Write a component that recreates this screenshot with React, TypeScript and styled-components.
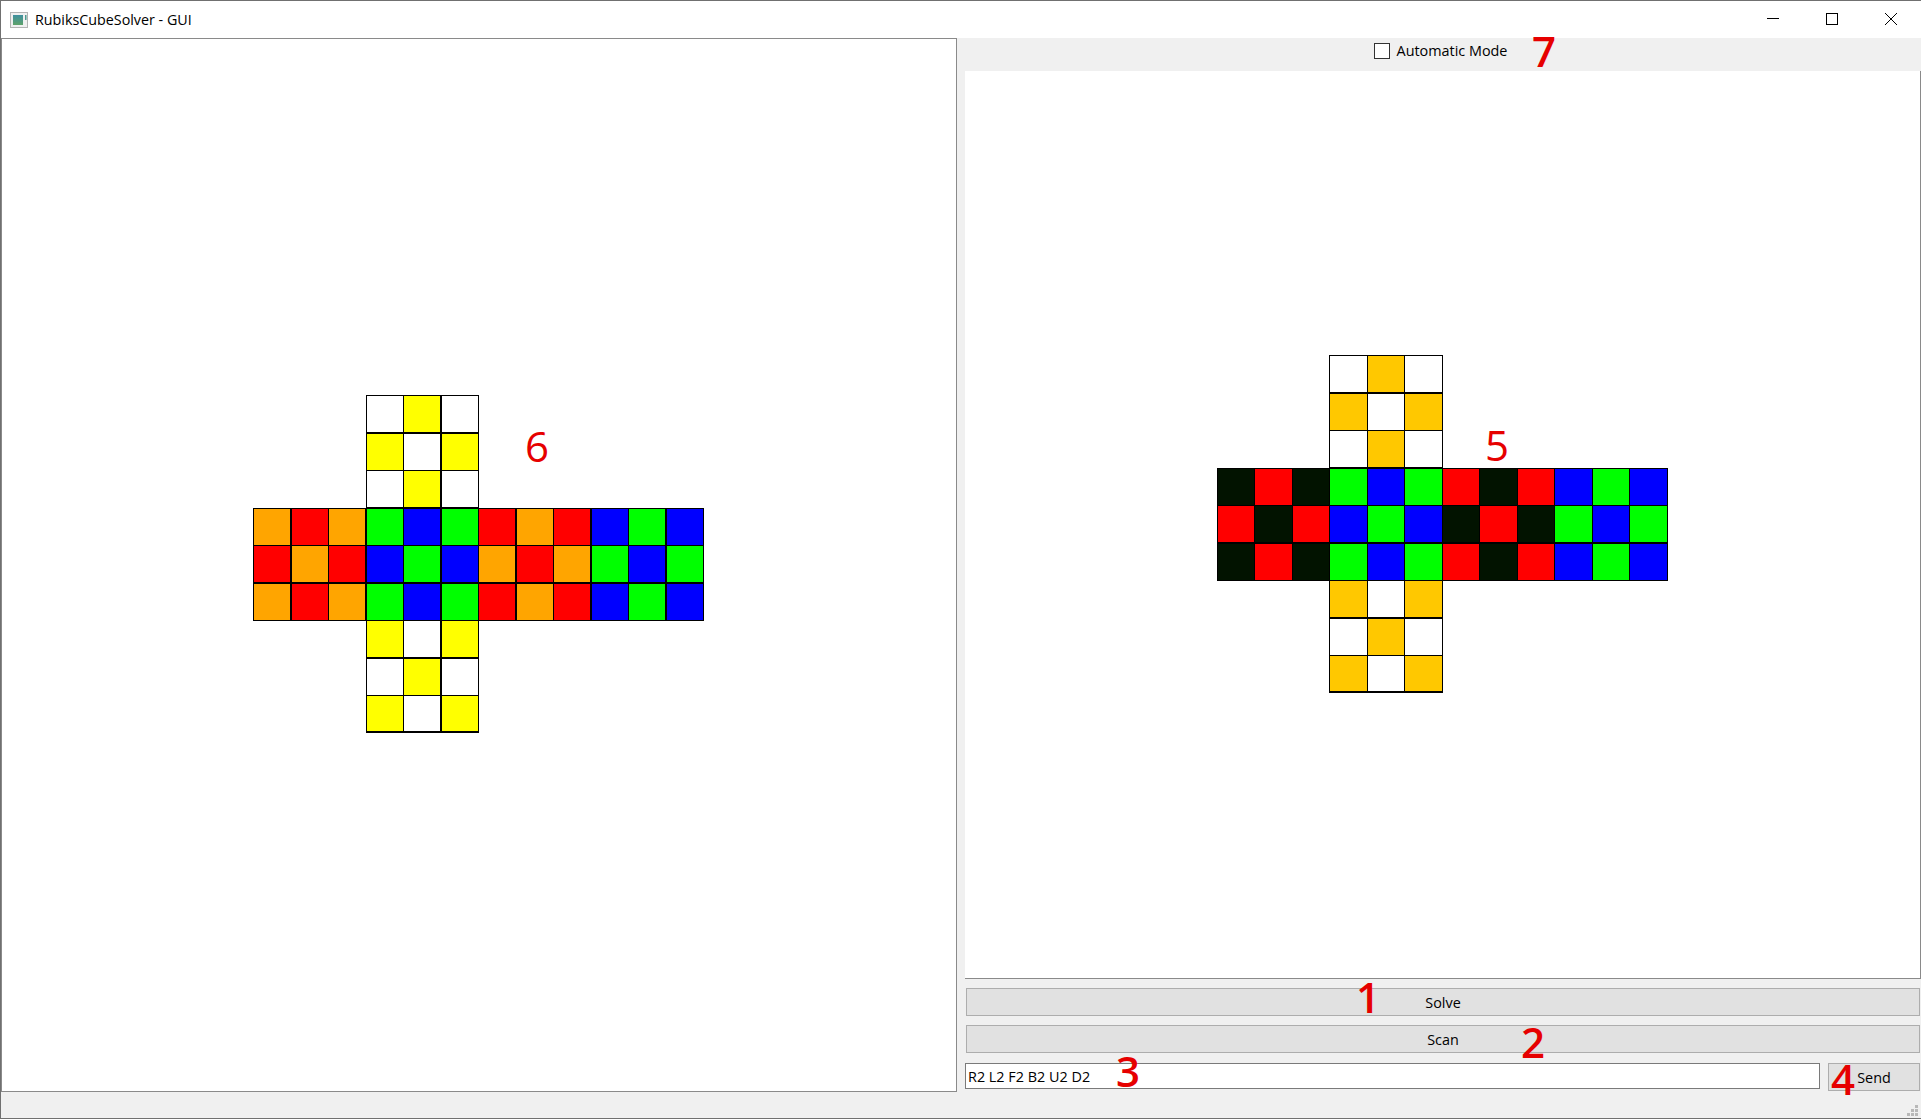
import React from 'react';
import styled, { createGlobalStyle } from 'styled-components';

const GlobalStyle = createGlobalStyle`
  html, body {
    margin: 0;
    padding: 0;
    background: #f0f0f0;
  }
`;

const Window = styled.div`
  position: relative;
  width: 1921px;
  height: 1119px;
  box-sizing: border-box;
  border: 1px solid #707070;
  border-right: 0;
  display: flex;
  flex-direction: column;
  background: #f0f0f0;
  color: #000;
  font-family: 'Open Sans', 'Noto Sans', sans-serif;
  font-size: 14.4px;
  overflow: hidden;
`;

const TitleBar = styled.div`
  height: 37px;
  flex: none;
  display: flex;
  align-items: center;
  background: #fff;
  padding: 0 0.5px 0 9px;
`;

const AppTitle = styled.span`
  margin-left: 7px;
  flex: 1;
  font-size: 14.3px;
`;

const WindowButton = styled.div`
  width: 59px;
  height: 37px;
  box-sizing: border-box;
  padding-bottom: 1px;
  display: flex;
  align-items: center;
  justify-content: center;
`;

const Body = styled.div`
  flex: 1;
  min-height: 0;
  display: flex;
`;

const CubePanel = styled.div`
  width: 956px;
  flex: none;
  box-sizing: border-box;
  border: 1px solid #8a8a8a;
  background: #fff;
  display: flex;
  align-items: center;
  justify-content: center;
  padding: 0 2px 2.5px 0;
`;

const Controls = styled.div`
  flex: 1;
  min-width: 0;
  display: flex;
  flex-direction: column;
  padding: 0 0 1px 8px;
`;

const ModeRow = styled.div`
  height: 33px;
  flex: none;
  box-sizing: border-box;
  display: flex;
  align-items: center;
  justify-content: center;
  gap: 7px;
  padding: 0 5px 8px 0;
`;

const CheckBox = styled.span`
  width: 14px;
  height: 14px;
  border: 1px solid #333;
  background: #fff;
  display: block;
`;

const ScanView = styled.div`
  flex: 1;
  min-height: 0;
  box-sizing: border-box;
  background: #fff;
  border-right: 1px solid #8a8a8a;
  border-bottom: 1px solid #8a8a8a;
  display: flex;
  align-items: center;
  justify-content: center;
  padding: 0 1.2px 1.5px 0;
`;

const PushButton = styled.button`
  display: block;
  margin: 9px 0 0 1px;
  height: 28px;
  width: 954px;
  box-sizing: border-box;
  border: 1px solid #adadad;
  background: #e1e1e1;
  color: #000;
  font: inherit;
  padding: 0;
`;

const CommandRow = styled.div`
  display: flex;
  align-items: flex-start;
  margin-top: 10px;
  gap: 8px;
`;

const CommandInput = styled.input`
  width: 855px;
  height: 26px;
  box-sizing: border-box;
  border: 1px solid #7a7a7a;
  background: #fff;
  font: inherit;
  color: #000;
  padding: 0 2px;
  outline: none;
`;

const SendButton = styled(PushButton)`
  margin: 0;
  width: 92px;
`;

const StatusBar = styled.div`
  height: 26px;
  flex: none;
  display: flex;
  align-items: flex-end;
  justify-content: flex-end;
`;

// the red numbers were painted over the screenshot afterwards
const Marker = styled.span<{ $x: number; $y: number; $thin?: boolean }>`
  position: absolute;
  left: ${p => p.$x}px;
  top: ${p => p.$y}px;
  font-size: 42px;
  font-weight: ${p => (p.$thin ? 400 : 600)};
  line-height: 42px;
  color: #e60000;
  pointer-events: none;
`;

const Net = styled.div`
  display: grid;
  grid-template-columns: repeat(12, 37.5px);
  grid-template-rows: repeat(9, 37.5px);
  width: 450px;
  height: 337.5px;
`;

const Sticker = styled.div<{ $color: string; $col: number; $row: number; $w: number }>`
  grid-column: ${p => p.$col};
  grid-row: ${p => p.$row};
  width: ${p => p.$w}px;
  height: 38px;
  box-sizing: border-box;
  border: 1px solid #000;
  border-bottom-width: ${p => (p.$row === 9 ? 2 : 1)}px;
  background: ${p => p.$color};
`;

const rows = [
  '...wyw......',
  '...ywy......',
  '...wyw......',
  'orogbgrorbgb',
  'rorbgborogbg',
  'orogbgrorbgb',
  '...ywy......',
  '...wyw......',
  '...ywy......',
];

type Palette = Record<string, string>;

const solved: Palette = { w: '#ffffff', y: '#ffff00', o: '#ffa500', r: '#ff0000', g: '#00ff00', b: '#0000ff' };
const scanned: Palette = { w: '#ffffff', y: '#ffc800', o: '#021300', r: '#ff0000', g: '#00ff00', b: '#0000ff' };

const CubeNet: React.FC<{ colors: Palette; cellWidth: number }> = ({ colors, cellWidth }) => (
  <Net>
    {rows.flatMap((row, r) =>
      row.split('').map((c, col) =>
        c === '.' ? null : (
          <Sticker key={`${r}-${col}`} $col={col + 1} $row={r + 1} $w={cellWidth} $color={colors[c]} />
        ),
      ),
    )}
  </Net>
);

const App: React.FC = () => (
  <>
    <GlobalStyle />
    <Window>
      <TitleBar>
        <svg width="18" height="16" viewBox="0 0 18 16">
          <defs>
            <linearGradient id="appIcon" x1="0" y1="0" x2="0" y2="1">
              <stop offset="0" stopColor="#3f8f9f" />
              <stop offset="1" stopColor="#5fa36a" />
            </linearGradient>
          </defs>
          <rect x="0.5" y="0.5" width="17" height="15" fill="#f0f0f0" stroke="#b4b4b4" />
          <rect x="3" y="3" width="10" height="10" fill="url(#appIcon)" />
          <rect x="15" y="3" width="1.5" height="5" fill="#4f9a90" />
        </svg>
        <AppTitle>RubiksCubeSolver - GUI</AppTitle>
        <WindowButton>
          <svg width="12" height="12" viewBox="0 0 12 12">
            <path d="M0 5.5H12" stroke="#000" strokeWidth="1" />
          </svg>
        </WindowButton>
        <WindowButton>
          <svg width="12" height="12" viewBox="0 0 12 12">
            <rect x="0.5" y="0.5" width="11" height="11" fill="none" stroke="#000" />
          </svg>
        </WindowButton>
        <WindowButton>
          <svg width="12" height="12" viewBox="0 0 12 12">
            <path d="M0 0L12 12M12 0L0 12" stroke="#000" strokeWidth="1" />
          </svg>
        </WindowButton>
      </TitleBar>
      <Body>
        <CubePanel>
          <CubeNet colors={solved} cellWidth={38} />
        </CubePanel>
        <Controls>
          <ModeRow>
            <CheckBox />
            <span>Automatic Mode</span>
          </ModeRow>
          <ScanView>
            <CubeNet colors={scanned} cellWidth={38.4} />
          </ScanView>
          <PushButton>Solve</PushButton>
          <PushButton>Scan</PushButton>
          <CommandRow>
            <CommandInput defaultValue="R2 L2 F2 B2 U2 D2" />
            <SendButton>Send</SendButton>
          </CommandRow>
        </Controls>
      </Body>
      <StatusBar>
        <svg width="14" height="14" viewBox="0 0 14 14" fill="#b8b8b8">
          <rect x="8" y="1" width="3" height="3" />
          <rect x="4" y="5" width="3" height="3" />
          <rect x="8" y="5" width="3" height="3" />
          <rect x="0" y="9" width="3" height="3" />
          <rect x="4" y="9" width="3" height="3" />
          <rect x="8" y="9" width="3" height="3" />
        </svg>
      </StatusBar>
      <Marker $x={1355} $y={975}>1</Marker>
      <Marker $x={1520} $y={1020}>2</Marker>
      <Marker $x={1115} $y={1049}>3</Marker>
      <Marker $x={1830} $y={1057}>4</Marker>
      <Marker $x={1484} $y={423} $thin>5</Marker>
      <Marker $x={524} $y={424} $thin>6</Marker>
      <Marker $x={1531} $y={29}>7</Marker>
    </Window>
  </>
);

export default App;
